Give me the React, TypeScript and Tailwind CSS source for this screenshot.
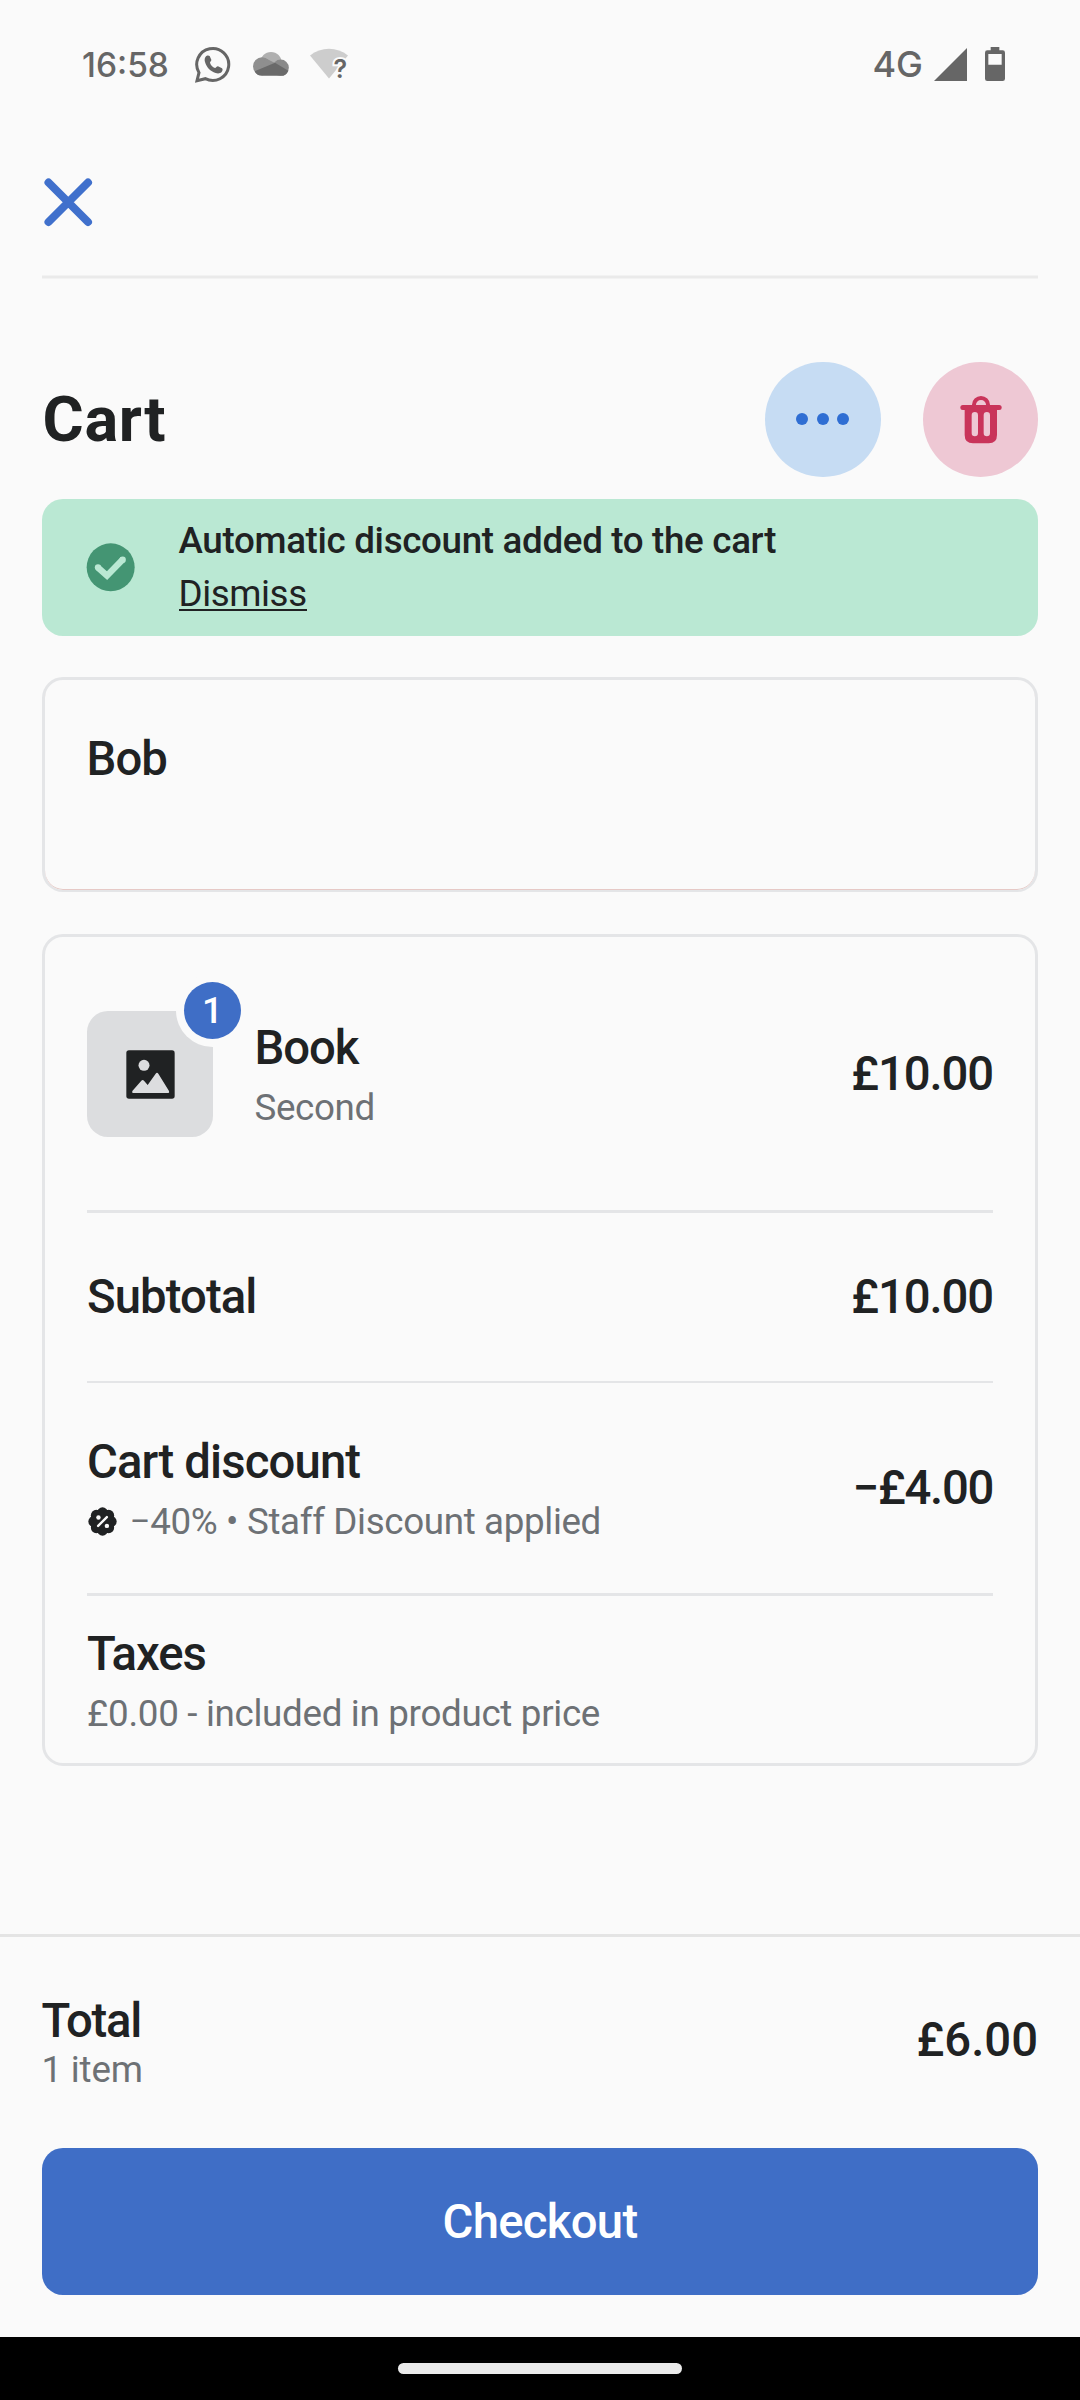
import React from "react";

const heading = "text-[47.25px] leading-[63px] font-medium text-[#202223] whitespace-nowrap";
const caption = "text-[36.75px] leading-[52px] text-[#6d7175] whitespace-nowrap";

function WhatsAppIcon() {
  return (
    <svg className="ml-[26px] h-[38px] w-[38px]" viewBox="0 0 114 114" fill="none">
      <path d="M6 107 L12 83 A48 48 0 1 1 31 101 Z" stroke="#666" strokeWidth="9" strokeLinejoin="miter" />
      <path
        d="M33 34c2-3 8-4 11-1l5 11c1 3-4 6-4 9 2 7 8 13 15 16 3 0 6-6 9-5l12 6c3 2 2 8-1 11-5 5-12 5-18 3C46 79 35 68 30 51c-2-6-1-13 3-17z"
        fill="#666"
      />
    </svg>
  );
}

function CloudIcon() {
  return (
    <svg className="ml-[20px] h-[24px] w-[36px]" viewBox="0 0 108 72">
      <circle cx="54" cy="32" r="32" fill="#b0b0b0" />
      <circle cx="83" cy="47" r="24.500" fill="#8a8a8a" />
      <path d="M65 33L76 25L90 34L84 60Z" fill="#8a8a8a" />
      <circle cx="27" cy="43" r="27" fill="#8f8f8f" />
      <path d="M36 18L66 33L40 62H20Z" fill="#8f8f8f" />
      <path d="M5 58L66 32L106 56C102 67 94 71.500 84 71.500H27C17 71.500 9 67 5 58Z" fill="#6a6a6a" />
    </svg>
  );
}

function WifiUnknownIcon() {
  return (
    <svg className="ml-[21px] h-[40px] w-[46px]" viewBox="0 -4 46 40">
      <path d="M0 7.500C11 -1.500 27 -1.500 38 7.500L19 30.500Z" fill="#cdcdcd" />
      <text
        x="23.500"
        y="29.500"
        fontFamily="Inter, sans-serif"
        fontSize="25"
        fontWeight="600"
        fill="#666"
        stroke="#fafafa"
        strokeWidth="4"
        paintOrder="stroke"
      >
        ?
      </text>
    </svg>
  );
}

function StatusBar() {
  return (
    <div className="flex h-[128px] items-center pr-[75px] pl-[82px] font-['Inter',sans-serif] text-[#666]">
      <span className="mt-[2px] w-[87px] text-[33.5px] leading-[40px] font-medium">16:58</span>
      <WhatsAppIcon />
      <CloudIcon />
      <WifiUnknownIcon />
      <span className="mb-[1px] ml-auto text-[36px] leading-[40px] font-medium">4G</span>
      <svg className="ml-[11px] h-[33px] w-[33px]" viewBox="0 0 33 33">
        <path d="M0 33H33V0Z" fill="#666" />
      </svg>
      <svg className="ml-[18px] h-[34px] w-[20px]" viewBox="0 0 60 102">
        <path
          fillRule="evenodd"
          fill="#666"
          d="M17 0H43V10H53Q60 10 60 17V95Q60 102 53 102H7Q0 102 0 95V17Q0 10 7 10H17ZM10 21V53H50V21Z"
        />
      </svg>
    </div>
  );
}

function TrashIcon() {
  return (
    <svg className="h-[48px] w-[42px]" viewBox="0 0 126 144">
      <path d="M42 29V26A21 20 0 0 1 84 26V29" fill="none" stroke="#c9345a" strokeWidth="12" />
      <rect x="1" y="27" width="124" height="15" rx="7.500" fill="#c9345a" />
      <path
        fillRule="evenodd"
        fill="#c9345a"
        d="M14 38H111V117Q111 142 86 142H39Q14 142 14 117ZM44.500 48Q35 48 35 58V111Q35 121 44.500 121T54 111V58Q54 48 44.500 48ZM80.500 48Q71 48 71 58V111Q71 121 80.500 121T90 111V58Q90 48 80.500 48Z"
      />
    </svg>
  );
}

function DiscountIcon() {
  return (
    <svg className="ml-[1px] mr-[12.500px] h-[29px] w-[29px]" viewBox="-43 -43 86 86">
      <g fill="#202223">
        <circle r="37" />
        <circle cx="0" cy="-26" r="16" />
        <circle cx="18.500" cy="-18.500" r="16" />
        <circle cx="26" cy="0" r="16" />
        <circle cx="18.500" cy="18.500" r="16" />
        <circle cx="0" cy="26" r="16" />
        <circle cx="-18.500" cy="18.500" r="16" />
        <circle cx="-26" cy="0" r="16" />
        <circle cx="-18.500" cy="-18.500" r="16" />
      </g>
      <path d="M-13 13L13 -13" stroke="#fafafa" strokeWidth="7" strokeLinecap="round" />
      <circle cx="-12" cy="-12" r="6.500" fill="#fafafa" />
      <circle cx="13" cy="13" r="6.500" fill="#fafafa" />
    </svg>
  );
}

function Thumbnail() {
  return (
    <div className="relative flex h-[126px] w-[126px] items-center justify-center rounded-[21px] bg-[#dcdddf]">
      <svg className="mt-[1px] ml-[1px] h-[49px] w-[49px]" viewBox="0 0 147 147">
        <rect x="1" y="1" width="145" height="145" rx="8" fill="#202223" />
        <circle cx="54" cy="46" r="16.500" fill="#dcdddf" />
        <path
          d="M19 123L46 92Q50 88 54 92L65 105L89 71Q93 66 97 71L129 123Q131 129 127 129H21Q17 129 19 123Z"
          fill="#dcdddf"
        />
      </svg>
      <div className="absolute -top-[37px] -right-[36px] flex h-[73px] w-[73px] items-center justify-center rounded-full bg-[#fafafa]">
        <div className="flex h-[57px] w-[57px] items-center justify-center rounded-full bg-[#3f6ec6] text-[36.75px] leading-[57px] font-medium text-white">
          1
        </div>
      </div>
    </div>
  );
}

export default function App() {
  return (
    <div className="flex h-[2400px] w-[1080px] flex-col overflow-hidden bg-[#fafafa] font-['Roboto',sans-serif] text-[#202223]">
      <StatusBar />

      <div className="mx-[42px] flex h-[151px] flex-col pt-[50px]">
        <svg className="ml-[2px] h-[49px] w-[49px]" viewBox="0 0 49 49">
          <path d="M4.500 4.500L44 44M44 4.500L4.500 44" stroke="#4070cc" strokeWidth="8" strokeLinecap="round" />
        </svg>
        <div className="mt-auto h-[4px] border-y border-[#f2f2f2] bg-[#eaeaea]" />
      </div>

      <div className="mx-[42px] mt-[83px] flex h-[115px] items-center">
        <h1 className="ml-[0.5px] text-[63px] leading-[74px] font-bold tracking-[0.7px]">Cart</h1>
        <button className="ml-auto flex h-[115px] w-[116px] items-center justify-center gap-[8.500px] rounded-full bg-[#c6dcf3] pr-[1px] pb-[1px]">
          <span className="h-[12px] w-[12px] rounded-full bg-[#2f6ed3]" />
          <span className="h-[12px] w-[12px] rounded-full bg-[#2f6ed3]" />
          <span className="h-[12px] w-[12px] rounded-full bg-[#2f6ed3]" />
        </button>
        <button className="ml-[42px] flex h-[115px] w-[115px] items-center justify-center rounded-full bg-[#eec8d4]">
          <TrashIcon />
        </button>
      </div>

      <div className="mx-[42px] mt-[22px] flex h-[137px] items-center rounded-[21px] bg-[#bae8d3] pl-[44px]">
        <svg className="h-[49px] w-[49px]" viewBox="0 0 147 147">
          <circle cx="74" cy="73" r="72" fill="#449573" />
          <path d="M35 73L63 98L111 49" fill="none" stroke="#bae8d3" strokeWidth="19" />
          <circle cx="36" cy="73" r="9.500" fill="#bae8d3" />
          <circle cx="110" cy="50" r="9.500" fill="#bae8d3" />
        </svg>
        <div className="mb-px ml-[43.500px] flex flex-col items-start text-[36.75px] leading-[53px]">
          <span className="font-medium tracking-[-0.33px]">Automatic discount added to the cart</span>
          <span className="relative tracking-[-0.42px]">
            Dismiss
            <span className="absolute bottom-[9px] left-0 h-[2px] w-[128px] bg-[#202223]" />
          </span>
        </div>
      </div>

      <div className="mx-[42px] mt-[41px] h-[215px] rounded-[21px] border-[3px] border-b-[2px] border-[#e4e5e7] pt-[48px] pl-[41.500px] shadow-[inset_0_-1px_0_#e6c9c6]">
        <p className={heading + " tracking-[-0.9px]"}>Bob</p>
      </div>

      <div className="mx-[42px] mt-[42px] flex h-[832px] flex-col rounded-[21px] border-[3px] border-[#e4e5e7] px-[42px]">
        <div className="flex h-[276px] items-center border-b-[3px] border-[#e4e5e7]">
          <Thumbnail />
          <div className="mt-[3px] ml-[41.500px] flex flex-col gap-[2px]">
            <span className={heading + " tracking-[-1.1px]"}>Book</span>
            <span className={caption + " tracking-[-0.35px]"}>Second</span>
          </div>
          <span className={heading + " mt-[2px] ml-auto tracking-[-1.1px]"}>£10.00</span>
        </div>
        <div className="flex h-[170px] items-center justify-between border-b-[2px] border-[#e4e5e7]">
          <span className={heading + " tracking-[-0.9px]"}>Subtotal</span>
          <span className={heading + " tracking-[-1.1px]"}>£10.00</span>
        </div>
        <div className="flex h-[213px] items-center justify-between border-b-[3px] border-[#e4e5e7]">
          <div className="mt-[2px] flex flex-col gap-[2px]">
            <span className={heading + " tracking-[-0.86px]"}>Cart discount</span>
            <span className="flex items-center">
              <DiscountIcon />
              <span className={caption + " tracking-[-0.35px]"}>−40% • Staff Discount applied</span>
            </span>
          </div>
          <span className={heading + " tracking-[-1.3px]"}>−£4.00</span>
        </div>
        <div className="flex flex-col gap-[2px] pt-[27px]">
          <span className={heading + " tracking-[-1.1px]"}>Taxes</span>
          <span className={caption + " tracking-[-0.31px]"}>£0.00 - included in product price</span>
        </div>
      </div>

      <div className="mt-[168px] flex h-[403px] flex-col border-t-[3px] border-[#e4e4e4] px-[42px] pt-[53px]">
        <div className="flex h-[108px] items-start justify-between">
          <div className="-ml-[0.5px] flex flex-col">
            <span className={heading + " tracking-[-1.2px]"}>Total</span>
            <span className="-mt-[9px] text-[36.75px] leading-[52px] tracking-[-0.2px] text-[#6d7175]">1 item</span>
          </div>
          <span className={heading + " mt-[19px]"}>£6.00</span>
        </div>
        <button className="mt-[50px] flex h-[147px] items-center justify-center rounded-[21px] bg-[#3f6ec6] pt-[1px] text-[47.25px] leading-[63px] font-medium tracking-[-0.7px] text-white">
          Checkout
        </button>
      </div>

      <div className="flex h-[63px] justify-center bg-black pt-[26px]">
        <div className="h-[11px] w-[284px] rounded-full bg-[#ebebeb]" />
      </div>
    </div>
  );
}
